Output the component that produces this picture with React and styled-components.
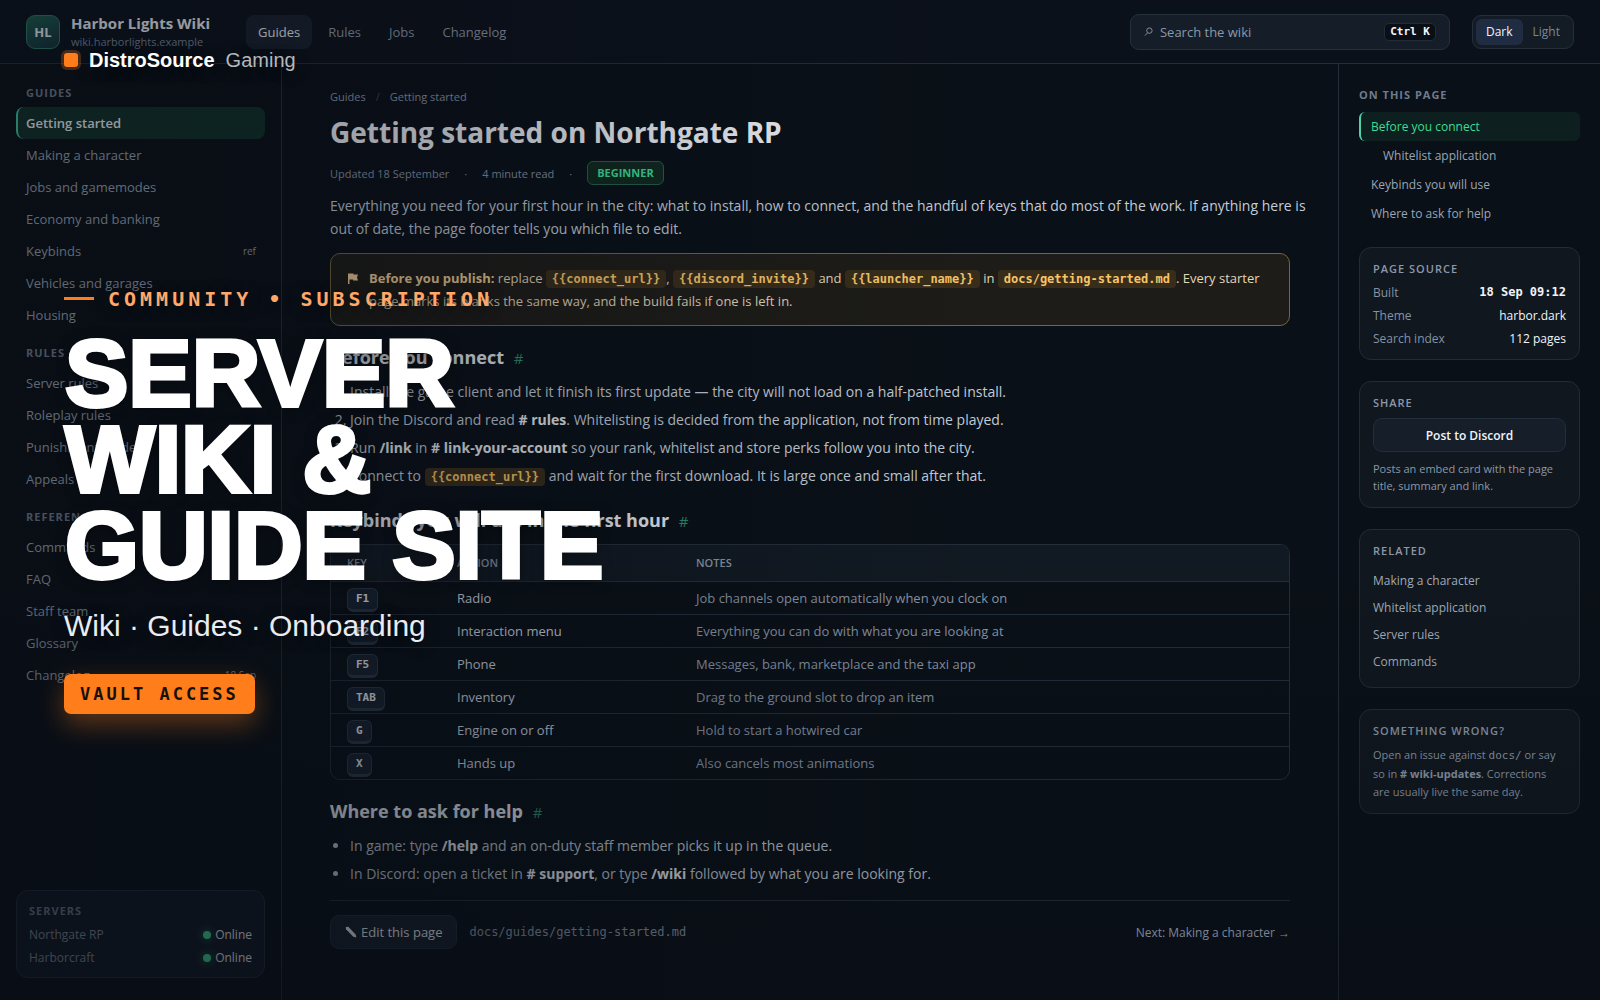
import { useState } from 'react';
import styled, { createGlobalStyle } from 'styled-components';

const sans = `'Open Sans', 'Noto Sans', sans-serif`
const mono = `'DejaVu Sans Mono', monospace`
const display = `'Liberation Sans', Arial, sans-serif`

const navLinks = ['Guides', 'Rules', 'Jobs', 'Changelog']

const sidebarGroups = [
  {
    title: 'Guides',
    items: [
      { label: 'Getting started', active: true },
      { label: 'Making a character' },
      { label: 'Jobs and gamemodes' },
      { label: 'Economy and banking' },
      { label: 'Keybinds', tag: 'ref' },
      { label: 'Vehicles and garages' },
      { label: 'Housing' }
    ]
  },
  {
    title: 'Rules',
    items: [
      { label: 'Server rules' },
      { label: 'Roleplay rules' },
      { label: 'Punishment ladder' },
      { label: 'Appeals' }
    ]
  },
  {
    title: 'Reference',
    items: [
      { label: 'Commands' },
      { label: 'FAQ' },
      { label: 'Staff team' },
      { label: 'Glossary' },
      { label: 'Changelog', tag: '18 Sep' }
    ]
  }
]

const servers = ['Northgate RP', 'Harborcraft']

const keybinds = [
  ['F1', 'Radio', 'Job channels open automatically when you clock on'],
  ['F2', 'Interaction menu', 'Everything you can do with what you are looking at'],
  ['F5', 'Phone', 'Messages, bank, marketplace and the taxi app'],
  ['TAB', 'Inventory', 'Drag to the ground slot to drop an item'],
  ['G', 'Engine on or off', 'Hold to start a hotwired car'],
  ['X', 'Hands up', 'Also cancels most animations']
]

const related = ['Making a character', 'Whitelist application', 'Server rules', 'Commands']

function App() {
  const [theme, setTheme] = useState('Dark')
  const [query, setQuery] = useState('')

  return (
    <>
      <GlobalStyle />
      <Page>
        <TopBar>
          <Logo>HL</Logo>
          <Brand>
            <BrandName>Harbor Lights Wiki</BrandName>
            <BrandHost>wiki.harborlights.example</BrandHost>
          </Brand>
          <TopNav>
            {navLinks.map((link, i) => (
              <TopLink key={link} href="#" $active={i === 0}>{link}</TopLink>
            ))}
          </TopNav>
          <Search>
            <SearchIcon viewBox="0 0 10 10" aria-hidden="true">
              <circle cx="6" cy="4" r="3" />
              <path d="M4 6.500 1 9.500" />
            </SearchIcon>
            <SearchInput
              type="text"
              aria-label="Search the wiki"
              placeholder="Search the wiki"
              value={query}
              onChange={(event) => setQuery(event.target.value)}
            />
            <Shortcut>Ctrl K</Shortcut>
          </Search>
          <ThemeSwitch>
            {['Dark', 'Light'].map((name) => (
              <ThemeButton
                key={name}
                type="button"
                $active={theme === name}
                onClick={() => setTheme(name)}
              >
                {name}
              </ThemeButton>
            ))}
          </ThemeSwitch>
        </TopBar>

        <Columns>
          <Sidebar>
            <nav>
              {sidebarGroups.map((group) => (
                <SideGroup key={group.title}>
                  <SideTitle>{group.title}</SideTitle>
                  {group.items.map((item) => (
                    <SideLink key={item.label} href="#" $active={item.active}>
                      {item.label}
                      {item.tag && <SideTag>{item.tag}</SideTag>}
                    </SideLink>
                  ))}
                </SideGroup>
              ))}
            </nav>
            <Servers>
              <ServersTitle>Servers</ServersTitle>
              {servers.map((name) => (
                <ServerRow key={name}>
                  {name}
                  <Status><Dot />Online</Status>
                </ServerRow>
              ))}
            </Servers>
          </Sidebar>

          <Article>
            <Crumbs>
              <CrumbLink href="#">Guides</CrumbLink>
              <Slash>/</Slash>
              <CrumbLink href="#">Getting started</CrumbLink>
            </Crumbs>
            <Title>Getting started on Northgate RP</Title>
            <Meta>
              <span>Updated 18 September</span>
              <span>·</span>
              <span>4 minute read</span>
              <span>·</span>
              <Level>Beginner</Level>
            </Meta>
            <Lead>
              Everything you need for your first hour in the city: what to install, how to connect, and the handful of
              keys that do most of the work. If anything here is out of date, the page footer tells you which file to edit.
            </Lead>
            <Callout>
              <Flag />
              <p>
                <b>Before you publish:</b> replace <Code>{'{{connect_url}}'}</Code>, <Code>{'{{discord_invite}}'}</Code> and{' '}
                <Code>{'{{launcher_name}}'}</Code> in <Code>docs/getting-started.md</Code>. Every starter page marks its
                blanks the same way, and the build fails if one is left in.
              </p>
            </Callout>

            <Heading>Before you connect <Anchor href="#">#</Anchor></Heading>
            <Steps>
              <li>Install the game client and let it finish its first update — the city will not load on a half-patched install.</li>
              <li>Join the Discord and read <b># rules</b>. Whitelisting is decided from the application, not from time played.</li>
              <li>Run <b>/link</b> in <b># link-your-account</b> so your rank, whitelist and store perks follow you into the city.</li>
              <li>Connect to <Code>{'{{connect_url}}'}</Code> and wait for the first download. It is large once and small after that.</li>
            </Steps>

            <Heading>Keybinds you will use in the first hour <Anchor href="#">#</Anchor></Heading>
            <TableFrame>
              <Table>
                <thead>
                  <tr>
                    <KeyHead>Key</KeyHead>
                    <ActionHead>Action</ActionHead>
                    <Head>Notes</Head>
                  </tr>
                </thead>
                <tbody>
                  {keybinds.map(([key, action, notes]) => (
                    <tr key={key}>
                      <Cell><Key>{key}</Key></Cell>
                      <Cell>{action}</Cell>
                      <NotesCell>{notes}</NotesCell>
                    </tr>
                  ))}
                </tbody>
              </Table>
            </TableFrame>

            <Heading>Where to ask for help <Anchor href="#">#</Anchor></Heading>
            <Bullets>
              <li>In game: type <b>/help</b> and an on-duty staff member picks it up in the queue.</li>
              <li>In Discord: open a ticket in <b># support</b>, or type <b>/wiki</b> followed by what you are looking for.</li>
            </Bullets>

            <PageFooter>
              <EditButton type="button"><Pencil />Edit this page</EditButton>
              <SourcePath>docs/guides/getting-started.md</SourcePath>
              <NextLink href="#">Next: Making a character →</NextLink>
            </PageFooter>
          </Article>

          <Aside>
            <TocTitle>On this page</TocTitle>
            <TocLink href="#" $active>Before you connect</TocLink>
            <TocLink href="#" $nested>Whitelist application</TocLink>
            <TocLink href="#">Keybinds you will use</TocLink>
            <TocLink href="#">Where to ask for help</TocLink>

            <Cards>
              <Card>
                <CardTitle>Page source</CardTitle>
                <Fact>Built<FactValue $mono>18 Sep 09:12</FactValue></Fact>
                <Fact>Theme<FactValue>harbor.dark</FactValue></Fact>
                <Fact>Search index<FactValue>112 pages</FactValue></Fact>
              </Card>
              <Card>
                <CardTitle>Share</CardTitle>
                <ShareButton type="button">Post to Discord</ShareButton>
                <Hint>Posts an embed card with the page title, summary and link.</Hint>
              </Card>
              <Card>
                <CardTitle>Related</CardTitle>
                <RelatedList>
                  {related.map((name) => (
                    <RelatedLink key={name} href="#">{name}</RelatedLink>
                  ))}
                </RelatedList>
              </Card>
              <Card>
                <CardTitle>Something wrong?</CardTitle>
                <Note>
                  Open an issue against <NoteCode>docs/</NoteCode> or say so in <b># wiki-updates</b>. Corrections
                  are usually live the same day.
                </Note>
              </Card>
            </Cards>
          </Aside>
        </Columns>

        <Overlay>
          <Maker>
            <MakerMark />
            <MakerName>DistroSource</MakerName>
            <MakerArea>Gaming</MakerArea>
          </Maker>
          <Eyebrow><Rule />Community • Subscription</Eyebrow>
          <HeroTitle>Server<br />Wiki &amp;<br />Guide Site</HeroTitle>
          <HeroText>Wiki · Guides · Onboarding</HeroText>
          <HeroButton type="button">Vault Access</HeroButton>
        </Overlay>
      </Page>
    </>
  )
}

const Flag = () => (
  <FlagIcon viewBox="0 0 12 14" aria-hidden="true">
    <path d="M1 1.500h5.500v1H11L10 5.500l1 3H6v-1H2.500V12H1z" fill="currentColor" />
  </FlagIcon>
)

const Pencil = () => (
  <PencilIcon viewBox="0 0 12 12" aria-hidden="true">
    <path d="M.8.900 3.300.8 10.600 8.500 11.400 11.500 8.300 10.800 1 3.300z" fill="currentColor" />
  </PencilIcon>
)

const GlobalStyle = createGlobalStyle`
  * {
    box-sizing: border-box;
  }
  body {
    margin: 0;
    background: #0a1017;
    color: #c3ccd8;
    font-family: ${sans};
    font-size: 14px;
  }
  h1, h2, h3, p, ol, ul {
    margin: 0;
  }
  a {
    color: inherit;
    text-decoration: none;
  }
  button {
    font-family: inherit;
    cursor: pointer;
  }
`

const Page = styled.div`
  position: relative;
  display: flex;
  flex-direction: column;
  min-height: 100vh;
`

/* top bar */

const TopBar = styled.header`
  display: flex;
  align-items: center;
  height: 64px;
  padding: 0 26px;
  background: #0b111b;
  border-bottom: 1px solid #242d39;
`

const Logo = styled.div`
  display: grid;
  place-items: center;
  width: 34px;
  height: 34px;
  border: 1px solid #2f7a66;
  border-radius: 9px;
  background: linear-gradient(160deg, #1f5f50, #14303a);
  color: #e8edf4;
  font-size: 13px;
  font-weight: 700;
`

const Brand = styled.div`
  margin-left: 11px;
`

const BrandName = styled.div`
  color: #e8edf4;
  font-size: 15px;
  font-weight: 700;
  line-height: 20px;
`

const BrandHost = styled.div`
  color: #79859a;
  font-size: 11px;
  line-height: 18px;
`

const TopNav = styled.nav`
  display: flex;
  gap: 4px;
  margin-left: 36px;
`

const TopLink = styled.a`
  padding: 0 12px;
  border-radius: 8px;
  background: ${props => props.$active ? '#18212d' : 'transparent'};
  color: ${props => props.$active ? '#e8edf4' : '#8b97a8'};
  font-size: 13px;
  line-height: 34px;
`

const Search = styled.div`
  display: flex;
  align-items: center;
  gap: 7px;
  width: 320px;
  height: 36px;
  margin-left: auto;
  padding: 0 13px;
  border: 1px solid #24303c;
  border-radius: 9px;
  background: #151e28;
  color: #8c98a8;
  font-size: 13px;
`

const SearchIcon = styled.svg`
  width: 9px;
  height: 9px;
  fill: none;
  stroke: currentColor;
`

const SearchInput = styled.input`
  flex: 1;
  min-width: 0;
  padding: 0;
  border: none;
  outline: none;
  background: transparent;
  color: #e8edf4;
  font-family: inherit;
  font-size: 13px;

  &::placeholder {
    color: #8c98a8;
  }
`

const Shortcut = styled.kbd`
  padding: 0 5px;
  border: 1px solid #222c38;
  border-radius: 5px;
  background: #0a0f16;
  color: #f4f7fb;
  font-family: ${mono};
  font-size: 11px;
  font-weight: 700;
  line-height: 16px;
`

const ThemeSwitch = styled.div`
  display: flex;
  margin-left: 22px;
  padding: 3px;
  border: 1px solid #252f3b;
  border-radius: 9px;
  background: #131b25;
`

const ThemeButton = styled.button`
  padding: 0 10px;
  border: none;
  border-radius: 6px;
  background: ${props => props.$active ? '#1f2c42' : 'transparent'};
  color: ${props => props.$active ? '#f0f4fa' : '#7b8798'};
  font-size: 12px;
  font-weight: ${props => props.$active ? 500 : 400};
  line-height: 26px;
`

const Columns = styled.div`
  flex: 1;
  display: grid;
  grid-template-columns: 282px minmax(0, 1fr) 262px;
`

/* left sidebar */

const Sidebar = styled.aside`
  display: flex;
  flex-direction: column;
  justify-content: space-between;
  padding: 20px 16px 22px;
  border-right: 1px solid #242d39;
`

const SideGroup = styled.div`
  margin-bottom: 13px;
`

const Label = styled.h3`
  color: #6f7b8c;
  font-size: 11px;
  font-weight: 700;
  letter-spacing: 1px;
  line-height: 18px;
  text-transform: uppercase;
`

const SideTitle = styled(Label)`
  margin-bottom: 5px;
  padding: 0 10px;
`

const SideLink = styled.a`
  display: flex;
  align-items: center;
  justify-content: space-between;
  height: 32px;
  padding: 0 9px 0 8px;
  border-left: 2px solid ${props => props.$active ? '#3fc9a0' : 'transparent'};
  border-radius: 8px;
  background: ${props => props.$active ? '#103029' : 'transparent'};
  color: ${props => props.$active ? '#e8edf4' : '#97a3b4'};
  font-size: 13px;
  font-weight: ${props => props.$active ? 600 : 400};
`

const SideTag = styled.span`
  color: #8c98a8;
  font-size: 10px;
`

const Servers = styled.section`
  padding: 11px 12px 8px;
  border: 1px solid #232d39;
  border-radius: 12px;
  background: #111924;
`

const ServersTitle = styled(Label)`
  margin-bottom: 3px;
`

const ServerRow = styled.div`
  display: flex;
  justify-content: space-between;
  color: #8592a3;
  font-size: 12px;
  line-height: 23px;
`

const Status = styled.span`
  display: flex;
  align-items: center;
  gap: 4px;
  color: #e8edf4;
`

const Dot = styled.i`
  width: 8px;
  height: 8px;
  border-radius: 50%;
  background: #3ddc97;
  box-shadow: 0 0 8px rgba(61, 220, 151, 0.5);
`

/* article */

const Article = styled.main`
  padding: 22px 48px 32px;
`

const Crumbs = styled.nav`
  display: flex;
  gap: 10px;
  font-size: 11px;
  line-height: 22px;
`

const CrumbLink = styled.a`
  color: #8c98a8;
`

const Slash = styled.span`
  color: #3d4754;
`

const Title = styled.h1`
  margin-top: 5px;
  color: #eef2f7;
  font-size: 28px;
  font-weight: 700;
  line-height: 38px;
`

const Meta = styled.div`
  display: flex;
  align-items: center;
  gap: 15px;
  margin-top: 10px;
  color: #8793a4;
  font-size: 11px;
`

const Level = styled.span`
  padding: 0 9px;
  border: 1px solid #24614c;
  border-radius: 6px;
  background: #10291f;
  color: #3ddc97;
  font-size: 11px;
  font-weight: 700;
  line-height: 22px;
  text-transform: uppercase;
`

const Lead = styled.p`
  margin: 9px -24px 0 0;
  font-size: 14px;
  line-height: 23px;
`

const Callout = styled.div`
  display: flex;
  gap: 10px;
  margin-top: 13px;
  padding: 13px 16px;
  border: 1px solid #75663f;
  border-radius: 10px;
  background: #1d1c18;
  color: #e2d6b8;
  font-size: 13px;
  line-height: 22px;

  b {
    color: #f3cf96;
  }
`

const FlagIcon = styled.svg`
  flex: none;
  width: 12px;
  height: 14px;
  margin-top: 5px;
  color: #f3cf96;
`

const Code = styled.code`
  padding: 2px 6px;
  border-radius: 4px;
  background: #382d1b;
  color: #f7c566;
  font-family: ${mono};
  font-size: 12px;
  font-weight: 700;
`

const Heading = styled.h2`
  margin-top: 19px;
  color: #e8edf4;
  font-size: 18px;
  font-weight: 700;
  line-height: 24px;
`

const Anchor = styled.a`
  margin-left: 5px;
  color: #2b8f70;
  font-size: 15px;
  font-weight: 400;
`

const Steps = styled.ol`
  margin-top: 10px;
  padding-left: 20px;
  font-size: 14px;

  li {
    line-height: 24px;
  }

  li + li {
    margin-top: 4px;
  }

  b {
    color: #e8edf4;
  }
`

const Bullets = styled(Steps).attrs({ as: 'ul' })``

const TableFrame = styled.div`
  margin-top: 11px;
  overflow: hidden;
  border: 1px solid #242e3a;
  border-radius: 10px;
`

const Table = styled.table`
  width: 100%;
  border-collapse: collapse;
  text-align: left;
`

const Head = styled.th`
  height: 36px;
  padding: 0 16px;
  background: #111922;
  color: #8c98a8;
  font-size: 11px;
  font-weight: 600;
  text-transform: uppercase;
`

const KeyHead = styled(Head)`
  width: 110px;
`

const ActionHead = styled(Head)`
  width: 239px;
`

const Cell = styled.td`
  height: 33px;
  padding: 0 16px;
  border-top: 1px solid #242e3a;
  color: #d3dae4;
  font-size: 13px;
`

const NotesCell = styled(Cell)`
  color: #8c98a8;
`

const Key = styled.kbd`
  display: inline-block;
  margin-top: 5px;
  padding: 0 8px;
  border: 1px solid #2b3947;
  border-bottom-width: 3px;
  border-radius: 6px;
  background: #162230;
  color: #e8edf4;
  font-family: ${mono};
  font-size: 11px;
  font-weight: 700;
  line-height: 20px;
`

const PageFooter = styled.footer`
  display: flex;
  align-items: center;
  gap: 12px;
  margin-top: 14px;
  padding-top: 14px;
  border-top: 1px solid #242e3a;
`

const EditButton = styled.button`
  display: flex;
  align-items: center;
  gap: 4px;
  height: 34px;
  padding: 0 14px;
  border: 1px solid #242e3a;
  border-radius: 9px;
  background: #16202b;
  color: #e8edf4;
  font-size: 13px;
  font-weight: 500;
`

const PencilIcon = styled.svg`
  width: 12px;
  height: 12px;
`

const SourcePath = styled.span`
  color: #8c98a8;
  font-family: ${mono};
  font-size: 12px;
`

const NextLink = styled.a`
  margin-left: auto;
  color: #aab5c3;
  font-size: 12px;
`

/* right column */

const Aside = styled.aside`
  padding: 22px 20px;
  border-left: 1px solid #242d39;
`

const TocTitle = styled(Label)`
  margin-bottom: 8px;
`

const TocLink = styled.a`
  display: block;
  padding-left: ${props => props.$nested ? '22px' : '10px'};
  border-left: 2px solid ${props => props.$active ? '#52cfa9' : 'transparent'};
  border-radius: 6px;
  background: ${props => props.$active ? '#0e1f1f' : 'transparent'};
  color: ${props => props.$active ? '#3ddc97' : '#99a5b5'};
  font-size: 12px;
  line-height: 29px;
`

const Cards = styled.div`
  display: flex;
  flex-direction: column;
  gap: 21px;
  margin-top: 19px;
`

const Card = styled.section`
  padding: 12px 13px 9px;
  border: 1px solid #222c37;
  border-radius: 12px;
  background: #10171e;
`

const CardTitle = styled(Label)`
  margin-bottom: 3px;
  color: #8c98a8;
  font-weight: 600;
`

const Fact = styled.div`
  display: flex;
  justify-content: space-between;
  color: #8592a3;
  font-size: 12px;
  line-height: 23px;
`

const FactValue = styled.span`
  color: #f0f4fa;
  font-family: ${props => props.$mono ? mono : sans};
  font-weight: ${props => props.$mono ? 700 : 500};
`

const ShareButton = styled.button`
  width: 100%;
  height: 34px;
  margin-top: 3px;
  border: 1px solid #222e3b;
  border-radius: 9px;
  background: #151e29;
  color: #f0f4fa;
  font-size: 12px;
  font-weight: 600;
`

const Hint = styled.p`
  margin: 8px 0 4px;
  color: #8c98a8;
  font-size: 11px;
  line-height: 17px;
`

const RelatedList = styled.nav`
  display: flex;
  flex-direction: column;
  padding: 4px 0 3px;
`

const RelatedLink = styled.a`
  color: #a3aebd;
  font-size: 12px;
  line-height: 27px;
`

const Note = styled.p`
  padding: 3px 5px 3px 0;
  color: #8c98a8;
  font-size: 11px;
  line-height: 18px;
`

const NoteCode = styled.code`
  font-family: ${mono};
  font-size: 11px;
`

/* promo layer that lies over the wiki */

const Overlay = styled.section`
  position: absolute;
  inset: 0;
  display: flex;
  flex-direction: column;
  align-items: flex-start;
  justify-content: center;
  padding: 0 64px;
  background:
    linear-gradient(90deg, rgba(8, 12, 20, 0.4) 0%, rgba(8, 12, 20, 0.32) 28%, rgba(8, 12, 20, 0.1) 48%, rgba(8, 12, 20, 0) 62%),
    linear-gradient(0deg, rgba(8, 12, 20, 0.34) 0%, rgba(8, 12, 20, 0) 45%);
  color: #fff;
  font-family: ${display};
  text-shadow: 0 2px 14px rgba(0, 0, 0, 0.5);
  pointer-events: none;
`

const Maker = styled.div`
  position: absolute;
  top: 48px;
  left: 64px;
  display: flex;
  align-items: center;
  font-size: 20px;
  line-height: 24px;
`

const MakerMark = styled.span`
  width: 14px;
  height: 14px;
  border-radius: 3px;
  background: #ff7d1a;
  box-shadow: 0 0 0 3px rgba(255, 125, 26, 0.25);
`

const MakerName = styled.span`
  margin-left: 11px;
  font-weight: 700;
`

const MakerArea = styled.span`
  margin-left: 11px;
  color: #b4b8bd;
`

const Eyebrow = styled.p`
  display: flex;
  align-items: center;
  gap: 14px;
  color: #ffa869;
  font-family: ${mono};
  font-size: 20px;
  font-weight: 700;
  letter-spacing: 4px;
  line-height: 24px;
  text-transform: uppercase;
`

const Rule = styled.i`
  width: 30px;
  height: 3px;
  background: #ff7d1a;
`

const HeroTitle = styled.h1`
  margin-top: 19px;
  padding-left: 1px;
  font-size: 95px;
  font-weight: 700;
  line-height: 86px;
  text-transform: uppercase;
  -webkit-text-stroke: 4px #fff;
`

const HeroText = styled.p`
  margin-top: 20px;
  color: #e9ecf0;
  font-size: 30px;
  line-height: 36px;
`

const HeroButton = styled.button`
  height: 40px;
  margin-top: 30px;
  padding: 0 16px;
  border: none;
  border-radius: 7px;
  background: #ff7d1a;
  box-shadow: 0 10px 26px rgba(255, 125, 26, 0.35);
  color: #14100c;
  font-family: ${mono};
  font-size: 17px;
  font-weight: 700;
  letter-spacing: 3px;
  text-transform: uppercase;
  pointer-events: auto;
`

export default App
